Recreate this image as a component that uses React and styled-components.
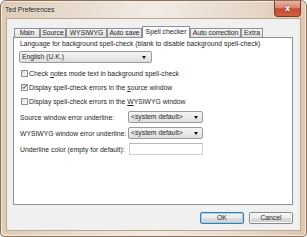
import React from "react";
import styled, { createGlobalStyle } from "styled-components";

const Global = createGlobalStyle`
  html, body { margin: 0; padding: 0; background: #fff; }
  body { font-family: "Liberation Sans", Arial, sans-serif; }
  * { box-sizing: border-box; }
`;

const Window = styled.div`
  width: 307px;
  height: 237px;
  border: 1px solid #8a7058;
  border-radius: 6px 6px 4px 4px;
  background: linear-gradient(90deg, #dfcbb6 0%, #e9dccf 25%, #f2ebe4 50%, #e9dccf 75%, #ddc8b2 100%);
  box-shadow: inset 0 0 0 1px #f3ece4;
  display: flex;
  flex-direction: column;
  padding: 0 6px 6px 6px;
  font-size: 6.8px;
  color: #262626;
`;

const TitleBar = styled.div`
  height: 18px;
  display: flex;
  justify-content: space-between;
  align-items: flex-start;
  margin-left: -2px;
`;

const Title = styled.div`
  font-size: 6.8px;
  line-height: 18px;
  color: #202020;
  text-shadow: 0 0 3px #fff;
`;

const CloseButton = styled.div`
  width: 27px;
  height: 16px;
  margin-right: -1px;
  border: 1px solid #7d3a2f;
  border-top: none;
  border-radius: 0 0 4px 4px;
  background: linear-gradient(180deg, #eab3a4 0%, #d98672 45%, #c54a34 52%, #d0603f 100%);
  display: flex;
  align-items: center;
  justify-content: center;
  color: #fff;
  font-family: "DejaVu Sans", sans-serif;
  font-weight: bold;
  font-size: 8px;
  text-shadow: 0 0 2px #5a1a10;
`;

const Client = styled.div`
  flex: 1;
  background: #f0f0f0;
  box-shadow: 0 0 0 1px #bfa78e;
  padding: 7px 7px 0 6px;
  display: flex;
  flex-direction: column;
`;

const TabStrip = styled.div`
  display: flex;
  align-items: flex-end;
  height: 11px;
  padding-left: 1px;
`;

const Tab = styled.div`
  width: ${(p) => p.$w}px;
  height: ${(p) => (p.$active ? 12 : 9)}px;
  margin-bottom: ${(p) => (p.$active ? -1 : 0)}px;
  border: 1px solid #8d9098;
  border-bottom: none;
  background: ${(p) => (p.$active ? "#fff" : "linear-gradient(180deg, #f6f6f6 0%, #ebebeb 50%, #dedede 100%)")};
  display: flex;
  align-items: center;
  justify-content: center;
  line-height: 1;
  white-space: nowrap;
  position: relative;
  z-index: ${(p) => (p.$active ? 2 : 1)};
`;

const Panel = styled.div`
  width: 280px;
  height: 168px;
  background: #fff;
  border: 1px solid #8d9098;
  padding: 1px 0 0 6px;
  display: flex;
  flex-direction: column;
  position: relative;
  z-index: 1;
`;

const Label = styled.div`
  height: 10px;
  line-height: 10px;
  white-space: nowrap;
`;

const Select = styled.div`
  width: ${(p) => p.$w}px;
  height: 12px;
  margin-left: ${(p) => p.$ml || 0}px;
  margin-top: ${(p) => p.$mt || 0}px;
  border: 1px solid #9a9a9a;
  border-radius: 2px;
  background: linear-gradient(180deg, #f4f4f4 0%, #ebebeb 50%, #dddddd 100%);
  display: flex;
  align-items: center;
  justify-content: space-between;
  padding: 0 ${(p) => p.$pr || 5}px 0 2px;
  line-height: 1;
  white-space: nowrap;
`;

const Arrow = styled.span`
  width: 0;
  height: 0;
  border-left: 2.5px solid transparent;
  border-right: 2.5px solid transparent;
  border-top: 3px solid #111;
`;

const Checks = styled.div`
  margin-top: 3px;
  display: flex;
  flex-direction: column;
`;

const CheckRow = styled.div`
  height: 14px;
  display: flex;
  align-items: center;
  gap: 1px;
  margin-left: 1px;
  white-space: nowrap;
`;

const Box = styled.span`
  width: 7px;
  height: 7px;
  border: 1px solid #8e8f8f;
  background: linear-gradient(135deg, #d8d8d8 0%, #f0f0f0 60%, #fafafa 100%);
  display: flex;
  align-items: center;
  justify-content: center;
`;

const Form = styled.div`
  margin-top: 3px;
  display: flex;
  flex-direction: column;
  gap: 4px;
`;

const FormRow = styled.div`
  height: 12px;
  display: flex;
  align-items: center;
`;

const FormLabel = styled.div`
  width: 108px;
  white-space: nowrap;
`;

const TextInput = styled.div`
  width: 74px;
  height: 12px;
  margin-left: 1px;
  border: 1px solid #d0d0d0;
  border-top-color: #b8b8b8;
  background: #fff;
`;

const ButtonRow = styled.div`
  margin-top: 7px;
  width: 280px;
  display: flex;
  justify-content: flex-end;
  gap: 5px;
`;

const Button = styled.div`
  width: 44px;
  height: 12px;
  border: 1px solid ${(p) => (p.$default ? "#3d7bad" : "#8a8a8a")};
  border-radius: 2px;
  background: linear-gradient(180deg, #f4f4f4 0%, #ececec 48%, #dddddd 52%, #cfcfcf 100%);
  box-shadow: ${(p) => (p.$default ? "inset 0 0 0 1px #9fd3f0" : "inset 0 0 0 1px #fafafa")};
  display: flex;
  align-items: center;
  justify-content: center;
  line-height: 1;
`;

const U = styled.span`
  text-decoration: underline;
`;

const tabs = [
  ["Main", 26],
  ["Source", 26],
  ["WYSIWYG", 41],
  ["Auto save", 35],
  ["Spell checker", 48],
  ["Auto correction", 51],
  ["Extra", 22],
];

function Check({ checked, children }) {
  return (
    <CheckRow>
      <Box>
        {checked && (
          <svg width="6" height="6" viewBox="0 0 6 6">
            <path d="M0.8 3.2 L2.3 4.8 L5.2 0.8" fill="none" stroke="#2a3a5a" strokeWidth="1.1" />
          </svg>
        )}
      </Box>
      <span>{children}</span>
    </CheckRow>
  );
}

export default function App() {
  return (
    <>
      <Global />
      <Window>
        <TitleBar>
          <Title>Ted Preferences</Title>
          <CloseButton>x</CloseButton>
        </TitleBar>
        <Client>
          <TabStrip>
            {tabs.map(([t, w]) => (
              <Tab key={t} $w={w} $active={t === "Spell checker"}>
                {t}
              </Tab>
            ))}
          </TabStrip>
          <Panel>
            <Label>Language for background spell-check (blank to disable background spell-check)</Label>
            <Select $w={133} $ml={-1} $mt={2} $pr={5}>
              <span>English (U.K.)</span>
              <Arrow />
            </Select>
            <Checks>
              <Check>
                Check <U>n</U>otes mode text in background spell-check
              </Check>
              <Check checked>
                Display spell-check errors in the <U>s</U>ource window
              </Check>
              <Check>
                Display spell-check errors in the <U>W</U>YSIWYG window
              </Check>
            </Checks>
            <Form>
              <FormRow>
                <FormLabel>Source window error underline:</FormLabel>
                <Select $w={75} $pr={4}>
                  <span>&lt;system default&gt;</span>
                  <Arrow />
                </Select>
              </FormRow>
              <FormRow>
                <FormLabel>WYSIWYG window error underline:</FormLabel>
                <Select $w={75} $pr={4}>
                  <span>&lt;system default&gt;</span>
                  <Arrow />
                </Select>
              </FormRow>
              <FormRow>
                <FormLabel>Underline color (empty for default):</FormLabel>
                <TextInput />
              </FormRow>
            </Form>
          </Panel>
          <ButtonRow>
            <Button $default>OK</Button>
            <Button>Cancel</Button>
          </ButtonRow>
        </Client>
      </Window>
    </>
  );
}
